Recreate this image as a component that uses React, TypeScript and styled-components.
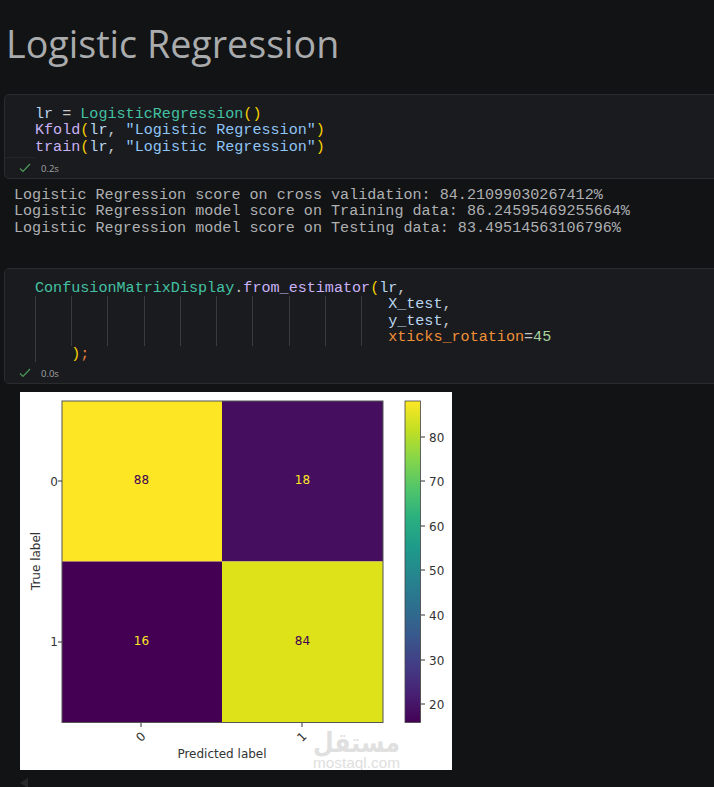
import React from "react";
import styled, { createGlobalStyle } from "styled-components";

const GlobalStyle = createGlobalStyle`
  html, body {
    margin: 0;
    padding: 0;
    background: #121315;
    overflow: hidden;
  }
`;

const Page = styled.div`
  width: 714px;
  height: 787px;
  overflow: hidden;
  position: relative;
  background: #121315;
`;

const Title = styled.h1`
  margin: 0;
  padding: 20px 0 0 6px;
  height: 94px;
  box-sizing: border-box;
  font-family: "Open Sans", "Noto Sans", sans-serif;
  font-size: 37.65px;
  line-height: 48px;
  font-weight: 400;
  color: #a9abad;
`;

const Cell = styled.section<{ $height: number }>`
  box-sizing: border-box;
  margin-left: 4px;
  width: 730px;
  height: ${(p) => p.$height}px;
  background: #1a1b1e;
  border: 1px solid #2b2c2e;
  border-radius: 5px;
  display: flex;
  flex-direction: column;
`;

const CodeArea = styled.div`
  flex: 1;
  padding: 11px 0 0 30px;
`;

const Line = styled.div`
  display: flex;
  height: 16.4px;
  font-family: "Liberation Mono", "DejaVu Sans Mono", monospace;
  font-size: 15.1px;
  line-height: 16.4px;
  white-space: pre;
  color: #b9d6ee;
`;

const Guide = styled.span<{ $ch?: number }>`
  box-sizing: border-box;
  width: ${(p) => p.$ch ?? 4}ch;
  height: 100%;
  border-left: 1px solid #3a3b3d;
`;

const Token = styled.span<{ $c: string }>`
  color: ${(p) => p.$c};
`;

const Status = styled.div`
  display: flex;
  align-items: center;
  height: 20px;
  padding-left: 14px;
  gap: 10px;
  font-family: "Open Sans", "Noto Sans", sans-serif;
  font-size: 9.5px;
  color: #a0a2a4;
  position: relative;
`;

const StatusRule = styled.div`
  position: absolute;
  left: 0;
  top: -1px;
  width: 30px;
  height: 1px;
  background: #242527;
`;

const Output = styled.pre`
  margin: 0;
  padding: 8px 0 0 14px;
  height: 89px;
  box-sizing: border-box;
  font-family: "Liberation Mono", "DejaVu Sans Mono", monospace;
  font-size: 15.1px;
  line-height: 16.4px;
  color: #aeb0b2;
`;

const Figure = styled.div`
  margin: 8px 0 0 20px;
  width: 432px;
  height: 378px;
  background: #ffffff;
`;

const ChartSvg = styled.svg`
  display: block;
`;

const ScrollMark = styled.div`
  position: absolute;
  left: 20px;
  top: 778px;
  width: 0;
  height: 0;
  border-style: solid;
  border-width: 5px 8px 5px 0;
  border-color: transparent #26282a transparent transparent;
`;

const C = {
  cls: "#43c2a3",
  fn: "#c9b2f7",
  par: "#f5d000",
  str: "#8fc4f5",
  arg: "#b9d6ee",
  kw: "#ef9038",
  num: "#a9d4a0",
  plain: "#c4c6c8",
  semi: "#e88040",
};

const Check = () => (
  <svg width="12" height="10" viewBox="0 0 12 10" fill="none">
    <path d="M1 5.5 L4 8.5 L11 1" stroke="#4e9a5a" strokeWidth="1.2" />
  </svg>
);

const viridis = [
  "#440154",
  "#482173",
  "#433e85",
  "#38598c",
  "#2d708e",
  "#25858e",
  "#1e9b8a",
  "#2ab07f",
  "#51c56a",
  "#85d54a",
  "#c2df23",
  "#fde725",
];

const Chart = () => {
  // coordinates are relative to the figure's top left corner
  const cbTicks = [
    [80, 45],
    [70, 89],
    [60, 134],
    [50, 178],
    [40, 223],
    [30, 268],
    [20, 312],
  ];
  const ink = "#333333";
  const font = "'DejaVu Sans', sans-serif";
  return (
    <ChartSvg width="432" height="378" viewBox="0 0 432 378">
      <defs>
        <linearGradient id="viridis" x1="0" y1="1" x2="0" y2="0">
          {viridis.map((c, i) => (
            <stop key={c} offset={i / (viridis.length - 1)} stopColor={c} />
          ))}
        </linearGradient>
      </defs>
      <rect x="42" y="9" width="160" height="160.5" fill="#fde725" />
      <rect x="202" y="9" width="161" height="160.5" fill="#450e5f" />
      <rect x="42" y="169.5" width="160" height="161" fill="#440154" />
      <rect x="202" y="169.5" width="161" height="161" fill="#dde318" />
      <rect x="42" y="9" width="321" height="321.5" fill="none" stroke="#555" strokeWidth="1" />
      <rect x="385" y="9" width="15.5" height="321.5" fill="url(#viridis)" stroke="#444" strokeWidth="0.8" />

      <g fontFamily={font} fontSize="12" fill={ink}>
        <text x="121.5" y="92" textAnchor="middle" fill="#440154">88</text>
        <text x="282.5" y="92" textAnchor="middle" fill="#fde725">18</text>
        <text x="121.5" y="253" textAnchor="middle" fill="#fde725">16</text>
        <text x="282.5" y="253" textAnchor="middle" fill="#440154">84</text>

        <text x="34" y="93.5" textAnchor="middle">0</text>
        <text x="34" y="254" textAnchor="middle">1</text>
        <line x1="38" y1="89" x2="42" y2="89" stroke={ink} />
        <line x1="38" y1="250" x2="42" y2="250" stroke={ink} />

        <line x1="121" y1="331" x2="121" y2="335" stroke={ink} />
        <line x1="282" y1="331" x2="282" y2="335" stroke={ink} />
        <text x="121" y="349" textAnchor="middle" transform="rotate(-45 121 345)">0</text>
        <text x="282" y="349" textAnchor="middle" transform="rotate(-45 282 345)">1</text>

        <text x="202" y="366" textAnchor="middle">Predicted label</text>
        <text x="20" y="169" textAnchor="middle" transform="rotate(-90 20 169)">True label</text>

        {cbTicks.map(([v, y]) => (
          <g key={v}>
            <line x1="401" y1={y} x2="405" y2={y} stroke={ink} />
            <text x="409" y={y + 4.5}>{v}</text>
          </g>
        ))}
      </g>

      <g fill="#e0e0e0" textAnchor="middle">
        <text
          x="336.5"
          y="360"
          fontFamily="'DejaVu Sans', sans-serif"
          fontWeight="700"
          fontSize="27"
          direction="rtl"
          textLength="87"
          lengthAdjust="spacingAndGlyphs"
        >
          مستقل
        </text>
        <text
          x="336.5"
          y="376"
          fontFamily="'Liberation Sans', sans-serif"
          fontSize="14.5"
          textLength="87"
          lengthAdjust="spacingAndGlyphs"
        >
          mostaql.com
        </text>
      </g>
    </ChartSvg>
  );
};

const App = () => {
  return (
    <Page>
      <GlobalStyle />
      <Title>Logistic Regression</Title>
      <Cell $height={85}>
        <CodeArea>
          <Line>
            <Token $c={C.arg}>lr</Token>
            <Token $c={C.plain}> = </Token>
            <Token $c={C.cls}>LogisticRegression</Token>
            <Token $c={C.par}>()</Token>
          </Line>
          <Line>
            <Token $c={C.fn}>Kfold</Token>
            <Token $c={C.par}>(</Token>
            <Token $c={C.arg}>lr</Token>
            <Token $c={C.plain}>, </Token>
            <Token $c={C.str}>"Logistic Regression"</Token>
            <Token $c={C.par}>)</Token>
          </Line>
          <Line>
            <Token $c={C.fn}>train</Token>
            <Token $c={C.par}>(</Token>
            <Token $c={C.arg}>lr</Token>
            <Token $c={C.plain}>, </Token>
            <Token $c={C.str}>"Logistic Regression"</Token>
            <Token $c={C.par}>)</Token>
          </Line>
        </CodeArea>
        <Status>
          <StatusRule />
          <Check />
          0.2s
        </Status>
      </Cell>
      <Output>
        {`Logistic Regression score on cross validation: 84.21099030267412%
Logistic Regression model score on Training data: 86.24595469255664%
Logistic Regression model score on Testing data: 83.49514563106796%`}
      </Output>
      <Cell $height={116}>
        <CodeArea>
          <Line>
            <Token $c={C.cls}>ConfusionMatrixDisplay</Token>
            <Token $c={C.plain}>.</Token>
            <Token $c={C.fn}>from_estimator</Token>
            <Token $c={C.par}>(</Token>
            <Token $c={C.arg}>lr</Token>
            <Token $c={C.plain}>,</Token>
          </Line>
          {[
            <Token key="x" $c={C.arg}>X_test<Token $c={C.plain}>,</Token></Token>,
            <Token key="y" $c={C.arg}>y_test<Token $c={C.plain}>,</Token></Token>,
            <Token key="k" $c={C.kw}>xticks_rotation<Token $c={C.plain}>=</Token><Token $c={C.num}>45</Token></Token>,
          ].map((content, i) => (
            <Line key={i}>
              {Array.from({ length: 9 }).map((_, g) => (
                <Guide key={g} />
              ))}
              <Guide $ch={3} />
              {content}
            </Line>
          ))}
          <Line>
            <Guide />
            <Token $c={C.par}>)</Token>
            <Token $c={C.semi}>;</Token>
          </Line>
        </CodeArea>
        <Status>
          <Check />
          0.0s
        </Status>
      </Cell>
      <Figure>
        <Chart />
      </Figure>
      <ScrollMark />
    </Page>
  );
};

export default App;
